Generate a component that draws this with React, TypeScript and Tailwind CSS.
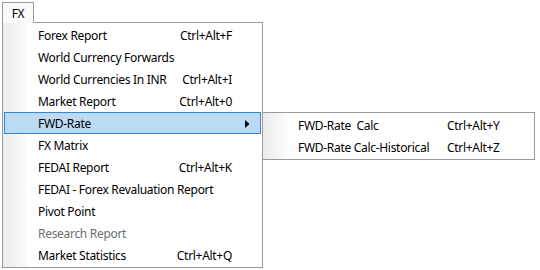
import { ReactNode } from 'react'

type Item = {
  label: string
  shortcut?: string
  disabled?: boolean
  active?: boolean
  submenu?: boolean
}

const items: Item[] = [
  { label: 'Forex Report', shortcut: 'Ctrl+Alt+F' },
  { label: 'World Currency Forwards' },
  { label: 'World Currencies In INR', shortcut: 'Ctrl+Alt+I' },
  { label: 'Market Report', shortcut: 'Ctrl+Alt+0' },
  { label: 'FWD-Rate', active: true, submenu: true },
  { label: 'FX Matrix' },
  { label: 'FEDAI Report', shortcut: 'Ctrl+Alt+K' },
  { label: 'FEDAI - Forex Revaluation Report' },
  { label: 'Pivot Point' },
  { label: 'Research Report', disabled: true },
  { label: 'Market Statistics', shortcut: 'Ctrl+Alt+Q' },
]

const subItems = [
  { label: 'FWD-Rate\u00a0 Calc', shortcut: 'Ctrl+Alt+Y' },
  { label: 'FWD-Rate Calc-Historical', shortcut: 'Ctrl+Alt+Z' },
]

// gutter strip on the left of each popup
function Gutter() {
  return <div className="absolute left-0 top-0 bottom-0 w-[24px] bg-gradient-to-r from-[#ececec] to-[#fbfbfb]" />
}

function Popup({ children, className }: { children: ReactNode; className: string }) {
  return (
    <div className={`border border-[#9a9a9a] bg-white py-px ${className}`}>
      <Gutter />
      <div className="relative">{children}</div>
    </div>
  )
}

function Arrow() {
  return (
    <svg width="5" height="8" viewBox="0 0 5 8">
      <path d="M0 0 L4.5 4 L0 8 Z" fill="#000" />
    </svg>
  )
}

export default function App() {
  return (
    <div
      className="w-[540px] h-[270px] bg-white overflow-hidden pl-[2px] pt-[2px] text-[12px] tracking-[-0.3px] text-black"
      style={{ fontFamily: '"Noto Sans", "Open Sans", sans-serif' }}
    >
      <div className="relative z-10 -mb-px flex h-[21px] w-[32px] items-center justify-center border border-b-0 border-[#9a9a9a] bg-[#fafafa] pt-px">
        FX
      </div>

      <div className="relative w-[261px]">
        <Popup className="relative">
          {items.map((it) => (
            <div
              key={it.label}
              className={`mx-px flex h-[22px] items-center pt-px ${
                it.active ? 'border border-[#2a8ae6] bg-[#bcdaf4]' : 'border border-transparent'
              } ${it.disabled ? 'text-[#6d6d6d]' : ''}`}
            >
              <span className="flex-1 pl-[33px] leading-none whitespace-nowrap">{it.label}</span>
              {it.shortcut && <span className="leading-none whitespace-nowrap">{it.shortcut}</span>}
              <span className="flex w-[28px] justify-end pr-[10px]">{it.submenu && <Arrow />}</span>
            </div>
          ))}
        </Popup>

        <Popup className="absolute left-[260px] top-[90px] w-[273px]">
          {subItems.map((it) => (
            <div key={it.label} className="mx-px flex h-[22px] items-center pt-px border border-transparent">
              <span className="w-[182px] pl-[33px] leading-none whitespace-nowrap">{it.label}</span>
              <span className="leading-none whitespace-nowrap">{it.shortcut}</span>
            </div>
          ))}
        </Popup>
      </div>
    </div>
  )
}
